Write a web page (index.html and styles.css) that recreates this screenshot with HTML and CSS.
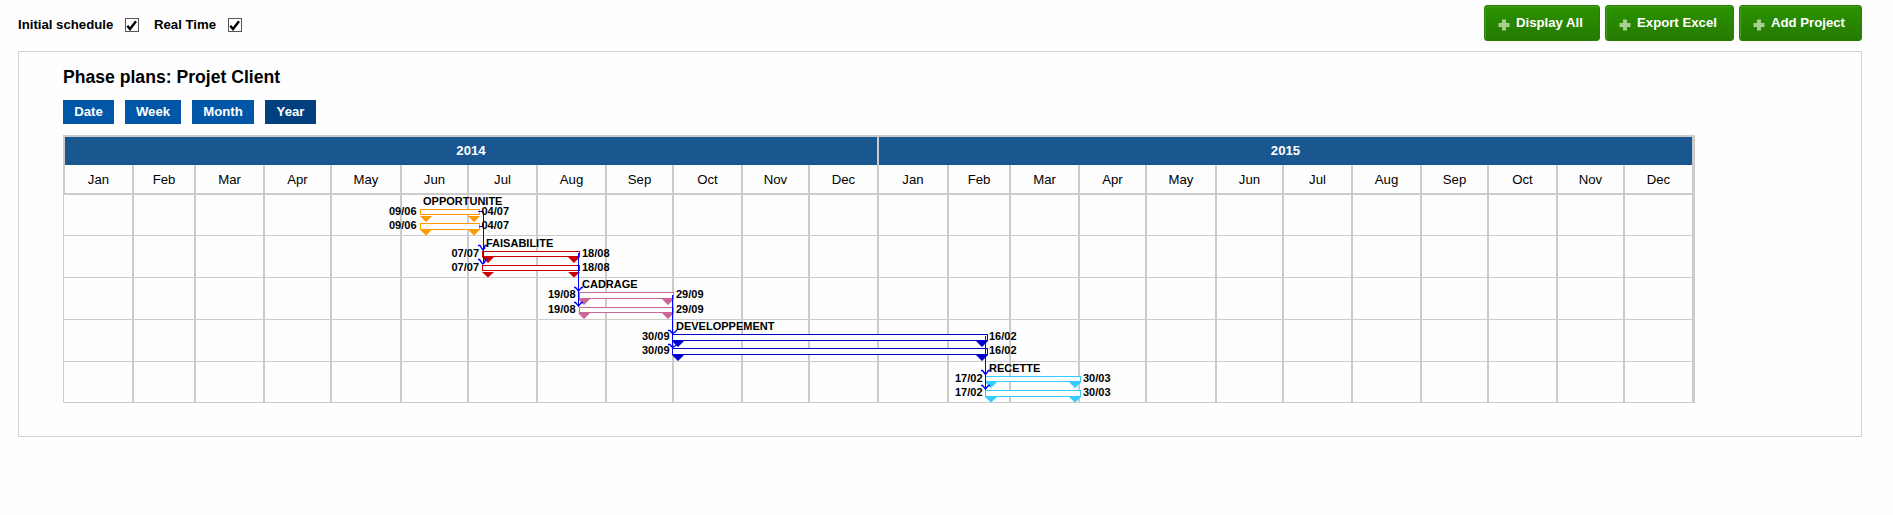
FILE: index.html
```html
<!DOCTYPE html>
<html lang="en">
<head>
<meta charset="utf-8">
<title>Phase plans</title>
<link rel="stylesheet" href="styles.css">
</head>
<body>
<header class="topbar">
  <div class="filters">
    <label class="filter">Initial schedule
      <svg class="check" width="14" height="14" viewBox="0 0 14 14"><rect class="box" x=".5" y=".5" width="13" height="13"/><path class="tick" d="M2.3 7.7 L5 11 L11 3.3"/></svg>
    </label>
    <label class="filter">Real Time
      <svg class="check" width="14" height="14" viewBox="0 0 14 14"><rect class="box" x=".5" y=".5" width="13" height="13"/><path class="tick" d="M2.3 7.7 L5 11 L11 3.3"/></svg>
    </label>
  </div>
  <div class="actions">
    <button class="action display"><svg class="plus" width="12" height="12" viewBox="0 0 12 12"><path d="M4 .5h4V4h3.5v4H8v3.5H4V8H.5V4H4z"/></svg>Display All</button>
    <button class="action export"><svg class="plus" width="12" height="12" viewBox="0 0 12 12"><path d="M4 .5h4V4h3.5v4H8v3.5H4V8H.5V4H4z"/></svg>Export Excel</button>
    <button class="action add"><svg class="plus" width="12" height="12" viewBox="0 0 12 12"><path d="M4 .5h4V4h3.5v4H8v3.5H4V8H.5V4H4z"/></svg>Add Project</button>
  </div>
</header>

<main class="panel">
  <h1 class="title">Phase plans: Projet Client</h1>
  <nav class="scales">
    <a class="scale">Date</a><a class="scale">Week</a><a class="scale">Month</a><a class="scale active">Year</a>
  </nav>

  <section class="gantt">
    <div class="years"><div class="year">2014</div><div class="year">2015</div></div>
    <div class="columns months">
      <div>Jan</div><div>Feb</div><div>Mar</div><div>Apr</div><div>May</div><div>Jun</div><div>Jul</div><div>Aug</div><div>Sep</div><div>Oct</div><div>Nov</div><div>Dec</div>
      <div>Jan</div><div>Feb</div><div>Mar</div><div>Apr</div><div>May</div><div>Jun</div><div>Jul</div><div>Aug</div><div>Sep</div><div>Oct</div><div>Nov</div><div>Dec</div>
    </div>
    <div class="rows">
      <div class="columns row short"><i></i><i></i><i></i><i></i><i></i><i></i><i></i><i></i><i></i><i></i><i></i><i></i><i></i><i></i><i></i><i></i><i></i><i></i><i></i><i></i><i></i><i></i><i></i><i></i></div>
      <div class="columns row"><i></i><i></i><i></i><i></i><i></i><i></i><i></i><i></i><i></i><i></i><i></i><i></i><i></i><i></i><i></i><i></i><i></i><i></i><i></i><i></i><i></i><i></i><i></i><i></i></div>
      <div class="columns row"><i></i><i></i><i></i><i></i><i></i><i></i><i></i><i></i><i></i><i></i><i></i><i></i><i></i><i></i><i></i><i></i><i></i><i></i><i></i><i></i><i></i><i></i><i></i><i></i></div>
      <div class="columns row"><i></i><i></i><i></i><i></i><i></i><i></i><i></i><i></i><i></i><i></i><i></i><i></i><i></i><i></i><i></i><i></i><i></i><i></i><i></i><i></i><i></i><i></i><i></i><i></i></div>
      <div class="columns row short"><i></i><i></i><i></i><i></i><i></i><i></i><i></i><i></i><i></i><i></i><i></i><i></i><i></i><i></i><i></i><i></i><i></i><i></i><i></i><i></i><i></i><i></i><i></i><i></i></div>
    </div>

    <svg class="tasks" width="1632" height="268" viewBox="63 135 1632 268">
      <g class="opportunite">
        <rect class="bar" x="420.5" y="209.5" width="59" height="5"/>
        <rect class="bar" x="420.5" y="223.5" width="59" height="6"/>
        <path class="cap" d="M420 216h12l-6 6zM468 216h12l-6 6zM420 229.500h12l-6 6zM468 229.500h12l-6 6z"/>
      </g>
      <g class="faisabilite">
        <rect class="bar" x="482.500" y="251.500" width="97" height="5"/>
        <rect class="bar" x="482.500" y="265.500" width="97" height="5"/>
        <path class="cap" d="M482 257h12l-6 6zM568 257h12l-6 6zM482 272h12l-6 5.500zM568 272h12l-6 5.500z"/>
      </g>
      <g class="cadrage">
        <rect class="bar" x="579.500" y="292.500" width="94" height="6"/>
        <rect class="bar" x="579.500" y="307.500" width="94" height="5"/>
        <path class="cap" d="M578 299h12l-6 6zM662 299h12l-6 6zM578 313h12l-6 6zM662 313h12l-6 6z"/>
      </g>
      <g class="developpement">
        <rect class="bar" x="672.500" y="334.500" width="315" height="6"/>
        <rect class="bar" x="672.500" y="348.500" width="315" height="6"/>
        <path class="cap" d="M672 341h12l-6 6zM976 341h12l-6 6zM672 355h12l-6 6zM976 355h12l-6 6z"/>
      </g>
      <g class="recette">
        <rect class="bar" x="985.500" y="376.500" width="95" height="5"/>
        <rect class="bar" x="985.500" y="390.500" width="95" height="6"/>
        <path class="cap" d="M985 382h12l-6 6zM1069 382h12l-6 6zM985 397h12l-6 5.500zM1069 397h12l-6 5.500z"/>
      </g>
      <g class="links">
        <path d="M478 211.500H483.500V264M479 226.500H483M578.500 253V307M672.500 295V355M985.500 336V390"/>
        <path class="heads" d="M478 245.500h2l2.500 4 2-1 .5-3h2M478 259.500h1.500l3 4.500 2-1.500 1-3h1.500"/>
        <path class="heads" d="M574 287.500h1.500l3 3.500 3-3.500h1.500M574 302.500h1.500l3 3.500 3-3.500h1.500"/>
        <path class="heads" d="M668 330.500h2l2.500 3 2.500-1.500 2-2M668 344.500h2l2.500 3 2.500-1.500 2-2"/>
        <path class="heads" d="M981 370.500h1.500l3 4 3-4h1.500M981 385.500h1.500l3 3.500 3-3.500h1.500"/>
      </g>
      <g class="names">
        <text x="423" y="205">OPPORTUNITE</text>
        <text x="486" y="247">FAISABILITE</text>
        <text x="582" y="288">CADRAGE</text>
        <text x="676" y="330">DEVELOPPEMENT</text>
        <text x="989" y="372">RECETTE</text>
        <text x="389" y="215">09/06</text><text x="481.500" y="215">04/07</text>
        <text x="389" y="229">09/06</text><text x="481.500" y="229">04/07</text>
        <text x="451.500" y="257">07/07</text><text x="582" y="257">18/08</text>
        <text x="451.500" y="271">07/07</text><text x="582" y="271">18/08</text>
        <text x="548" y="298">19/08</text><text x="676" y="298">29/09</text>
        <text x="548" y="313">19/08</text><text x="676" y="313">29/09</text>
        <text x="642" y="340">30/09</text><text x="989" y="340">16/02</text>
        <text x="642" y="354">30/09</text><text x="989" y="354">16/02</text>
        <text x="955" y="382">17/02</text><text x="1083" y="382">30/03</text>
        <text x="955" y="396">17/02</text><text x="1083" y="396">30/03</text>
      </g>
    </svg>
  </section>
</main>
</body>
</html>
```

FILE: styles.css
```css
* { box-sizing: border-box; }

body {
  margin: 0;
  padding: 5px 31px 0 18px;
  background: #fefefe;
  color: #000;
  font: 13.2px/16px "Liberation Sans", Arial, sans-serif;
}

.topbar {
  display: flex;
  justify-content: space-between;
  height: 46px;
}

.filters { display: flex; padding-top: 12px; gap: 15px; font-weight: bold; }
.filter { display: flex; height: 16px; line-height: 16px; }
.check { display: block; margin: 1px 0 0 auto; }
.filter:first-child { width: 121px; }
.filter:last-child { width: 88px; }
.box { fill: #fff; stroke: #555; }
.tick { fill: none; stroke: #000; stroke-width: 2.4; }

.actions { display: flex; gap: 5px; height: 36px; }
.action {
  display: flex;
  align-items: flex-start;
  gap: 6px;
  padding: 9px 0 0 13px;
  border: 1px solid #267f00;
  border-radius: 3px;
  background: linear-gradient(#2b9200, #257a00);
  box-shadow: inset 1px 1px 0 #43a01c;
  color: #fff;
  font: bold 13.2px/16px "Liberation Sans", Arial, sans-serif;
  white-space: nowrap;
}
.display { width: 116px; }
.export { width: 129px; }
.add { width: 123px; }
.plus { display: block; flex: none; margin-top: 4px; fill: #a6d092; }

.panel {
  height: 386px;
  padding: 15px 44px 0;
  border: 1px solid #d5d5d5;
}
.title { margin: 0; font-size: 17.6px; line-height: 20px; }

.scales { display: flex; gap: 11px; margin: 13px 0 11px; }
.scale {
  background: #0057a8;
  color: #fff;
  font-weight: bold;
  line-height: 24px;
  text-align: center;
  width: 51px;
}
.scale:nth-child(2) { width: 56px; }
.scale:nth-child(3) { width: 62px; }
.scale.active { background: #00407e; }

.gantt { position: relative; width: 1632px; }
.years {
  display: grid;
  grid-template-columns: 814px 813px;
  border: solid #ccc;
  border-width: 2px 3px 0 2px;
  background: #1a5790;
}
.year {
  height: 28px;
  color: #fff;
  font-weight: bold;
  line-height: 28px;
  text-align: center;
}
.year:first-child { border-right: 2px solid #ccc; }

.columns {
  display: grid;
  grid-template-columns: 69px 62px 69px 67px 70px 67px 69px 69px 67px 69px 67px 69px 70px 62px 69px 67px 70px 67px 69px 69px 67px 69px 67px 70px;
}
.columns > * { border-right: 2px solid #ccc; }
.columns > :last-child { border-right-width: 3px; }
.months {
  height: 30px;
  border: solid #ccc;
  border-width: 0 0 2px 2px;
  line-height: 30px;
  text-align: center;
}
.months > * { height: 28px; }
.row { height: 42px; padding-left: 1px; border: solid #ccc; border-width: 0 0 1px 1px; }
.short { height: 41px; }

.tasks { position: absolute; top: 0; left: 0; }
.bar { fill: #fff; stroke: currentColor; }
.cap { fill: currentColor; }
.opportunite { color: #f90; }
.faisabilite { color: #c00; }
.cadrage { color: #cc6699; }
.developpement { color: #00c; }
.recette { color: #3cf; }
.links { fill: none; stroke: #00f; }
.heads { stroke-width: 1.4; }
.names { font-size: 11px; font-weight: bold; }
```
